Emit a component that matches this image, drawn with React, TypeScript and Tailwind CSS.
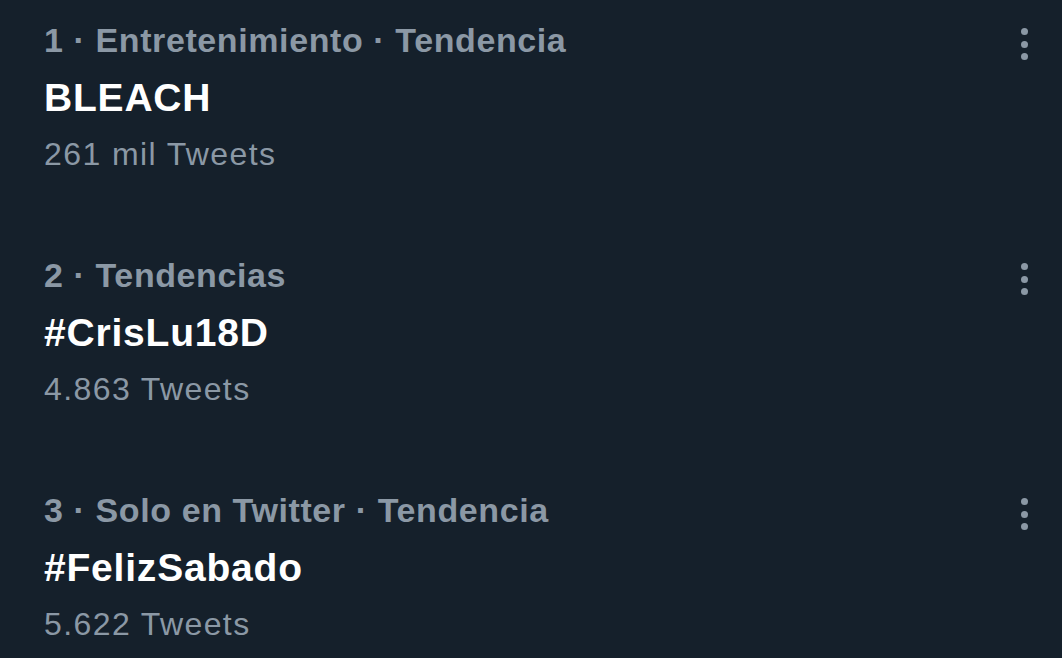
const trends = [
  { meta: '1 · Entretenimiento · Tendencia', title: 'BLEACH', count: '261 mil Tweets' },
  { meta: '2 · Tendencias', title: '#CrisLu18D', count: '4.863 Tweets' },
  { meta: '3 · Solo en Twitter · Tendencia', title: '#FelizSabado', count: '5.622 Tweets' },
]

function Dots() {
  return (
    <div className="flex flex-col items-center gap-[5.5px] pt-[16px]">
      <span className="w-[7px] h-[7px] rounded-full bg-[#8b98a5]" />
      <span className="w-[7px] h-[7px] rounded-full bg-[#8b98a5]" />
      <span className="w-[7px] h-[7px] rounded-full bg-[#8b98a5]" />
    </div>
  )
}

export default function App() {
  return (
    <div
      className="w-[1062px] h-[658px] overflow-hidden bg-[#15202b] pt-[12px] flex flex-col gap-[64px]"
      style={{ fontFamily: '"Liberation Sans", Arial, sans-serif' }}
    >
      {trends.map((t) => (
        <div key={t.title} className="flex justify-between pl-[44px] pr-[34px]">
          <div className="flex flex-col">
            <div className="h-[57px] leading-[57px] text-[34px] font-bold text-[#8b98a5] tracking-[0.6px]">{t.meta}</div>
            <div className="h-[57px] leading-[57px] text-[39px] font-bold text-white tracking-[0.8px]">{t.title}</div>
            <div className="h-[57px] leading-[57px] text-[32px] text-[#8b98a5] tracking-[1.4px]">{t.count}</div>
          </div>
          <Dots />
        </div>
      ))}
    </div>
  )
}
